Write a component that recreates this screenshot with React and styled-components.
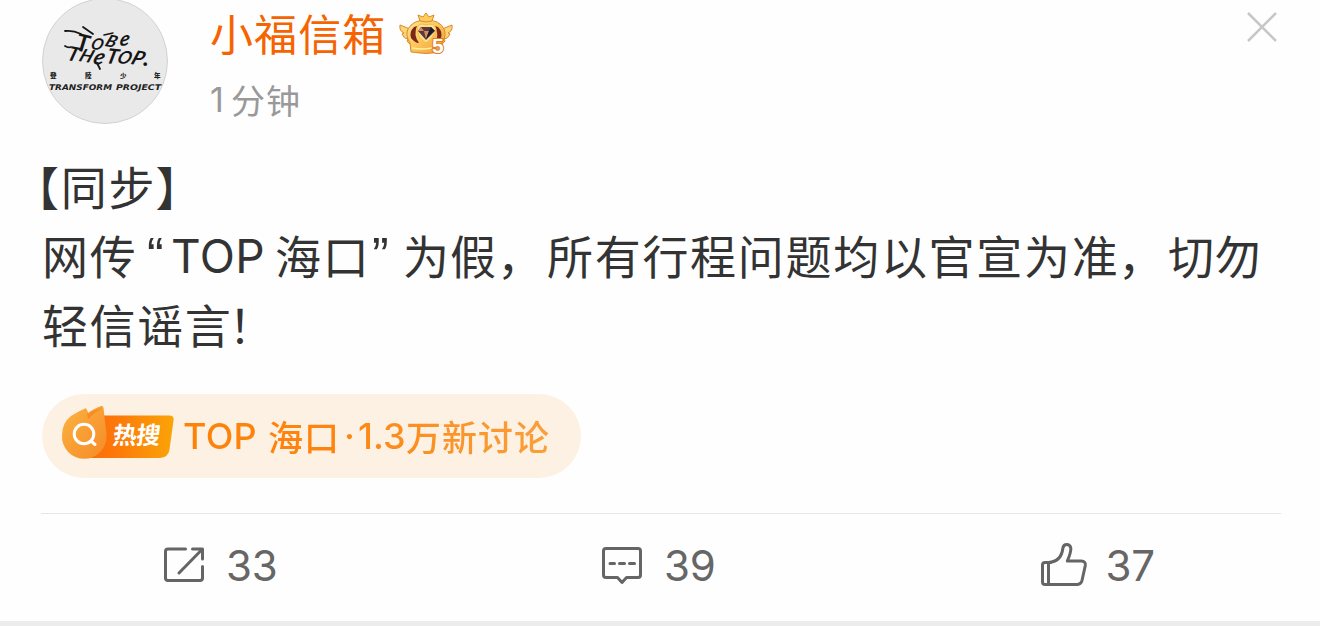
import React from "react";
import styled, { createGlobalStyle } from "styled-components";

const GlobalStyle = createGlobalStyle`
  * {
    box-sizing: border-box;
  }
  body {
    margin: 0;
    background: #fefefe;
    font-family: Inter, "Noto Sans CJK SC", sans-serif;
    overflow: hidden;
  }
  svg {
    display: block;
    flex: none;
  }
`;

const Card = styled.article`
  width: 1320px;
  height: 626px;
  display: flex;
  flex-direction: column;
  border-bottom: 5px solid #ececec;
  overflow: hidden;
`;

const Header = styled.header`
  height: 151px;
  padding: 0 43px 0 42px;
  display: flex;
  align-items: flex-start;
`;

const Author = styled.div`
  flex: 1;
  margin-left: 41px;
  display: flex;
  flex-direction: column;
`;

const NameRow = styled.div`
  display: flex;
  height: 70px;
  align-items: flex-start;
`;

const Name = styled.div`
  width: 188px;
  color: #f56400;
  font-size: 43px;
  line-height: 70px;
  letter-spacing: 1.1px;
  white-space: nowrap;
`;

const Time = styled.div`
  display: flex;
  color: #999;
  line-height: 59px;
`;

const Close = styled.button`
  margin-top: 12px;
  padding: 0;
  border: 0;
  background: none;
`;

const Body = styled.div`
  height: 243px;
  padding-left: 42px;
  color: #333;
`;

const Line = styled.p`
  display: flex;
  height: 69px;
  margin: 0;
  line-height: 69px;
  white-space: pre;
`;

const Run = styled.span`
  margin-left: ${(p) => p.$left || 0}px;
  width: ${(p) => (p.$width ? `${p.$width}px` : "auto")};
  padding-top: ${(p) => p.$drop || 0}px;
  flex: none;
  font-family: ${(p) => p.$font || '"Noto Sans CJK SC"'}, sans-serif;
  font-size: ${(p) => p.$size || 46}px;
  letter-spacing: ${(p) => (p.$space === undefined ? 1.8 : p.$space)}px;
`;

const Topic = styled.div`
  width: 539px;
  height: 84px;
  margin-left: 42px;
  padding-left: 18px;
  display: flex;
  align-items: center;
  border-radius: 42px;
  background: #fdf1e4;
`;

const TopicText = styled.div`
  display: flex;
  height: 84px;
  line-height: 84px;
  margin-left: 7px;
  font-weight: 500;
  white-space: pre;
  color: transparent;
  background: linear-gradient(90deg, #fd8208, #fd8410 40%, #f9a03c);
  background-clip: text;
`;

const Actions = styled.footer`
  width: 1240px;
  height: 108px;
  margin: 35px 0 0 41px;
  display: grid;
  grid-template-columns: 438px 438px 1fr;
  border-top: 1px solid #e5e5e5;
`;

const Action = styled.button`
  display: flex;
  align-items: center;
  height: 104px;
  padding: 0 0 0 ${(p) => p.$left}px;
  border: 0;
  background: none;
  color: #666;
  font: 400 42px Inter, sans-serif;
`;

const Count = styled.span`
  margin-left: ${(p) => p.$left || 20}px;
  padding-bottom: 2px;
  letter-spacing: -0.3px;
`;

const Avatar = () => (
  <svg width="127" height="126" viewBox="42 0 127 126">
    <circle cx="105" cy="61" r="62.5" fill="#e9e9e9" stroke="#d2d2d2" />
    <g
      fill="#161616"
      fontFamily="Lato"
      fontWeight="700"
      fontStyle="italic"
      fontSize="20"
    >
      <text transform="translate(75 50) rotate(14) skewX(4)" fontSize="24">T</text>
      <text transform="translate(90 49) rotate(6) skewX(-10)" fontSize="16">O</text>
      <text transform="translate(104 46) rotate(10) skewX(-14)" fontSize="17">B</text>
      <text transform="translate(119 46) rotate(-4) skewX(-14)" fontSize="20">e</text>
      <text transform="translate(66 60) rotate(10) skewX(-8)">T</text>
      <text transform="translate(78 61) rotate(8) skewX(-14)" fontSize="18">H</text>
      <text transform="translate(92 64) rotate(4) skewX(-14)" fontSize="22">e</text>
      <text transform="translate(105 63) rotate(6) skewX(-8)" fontSize="21">T</text>
      <text transform="translate(116 63) rotate(6) skewX(-14)" fontSize="18">O</text>
      <text transform="translate(130 64) rotate(8) skewX(-14)" fontSize="20">P</text>
      <text transform="translate(143 66)" fontSize="24">.</text>
    </g>
    <g fill="none" stroke="#161616" strokeLinecap="round">
      <path d="M65 31q8-1 16 3M83 27l10 7M65 46q3 2 6 1M97 63l3 6" strokeWidth="1.8" />
      <path d="M104 35l9-2" strokeWidth="1.5" />
    </g>
    <g
      fill="#222"
      fontFamily="Noto Sans CJK TC"
      fontWeight="900"
      fontSize="6.5"
    >
      <text x="50" y="78">登</text>
      <text x="85" y="78">陸</text>
      <text x="120" y="78">少</text>
      <text x="154" y="78">年</text>
    </g>
    <g
      fill="#222"
      fontFamily="DejaVu Sans"
      fontWeight="700"
      fontStyle="italic"
      fontSize="7.8"
    >
      <text x="49" y="90" textLength="63" lengthAdjust="spacingAndGlyphs">TRANSFORM</text>
      <text x="116" y="90" textLength="45" lengthAdjust="spacingAndGlyphs">PROJECT</text>
    </g>
  </svg>
);

const CrownBadge = () => (
  <svg width="56" height="58" viewBox="398 0 56 58">
    <defs>
      <linearGradient id="gold" x1="0" y1="0" x2="1" y2="1">
        <stop offset="0" stopColor="#ffe493" />
        <stop offset=".5" stopColor="#fcc65a" />
        <stop offset="1" stopColor="#ef982f" />
      </linearGradient>
    </defs>
    <g stroke="#dc8a2b" strokeWidth="1" strokeLinejoin="round">
      <path
        d="M410 29l-10-4q-1 6 4 8l-2 1q2 5 6 5l-1 2q2 4 7 4zM442 29l10-4q1 6-4 8l2 1q-2 5-6 5l1 2q-2 4-7 4z"
        fill="#fbd477"
      />
      <path
        d="M411 52l-1-9q-5-8-2-14 5-9 18-9 14 0 18 9 3 6-2 14l-1 9q-15 3-30 0z"
        fill="url(#gold)"
      />
      <path d="M420 21l-2-6 5 2 3-4 3 4 5-2-2 6q-6 2-12 0z" fill="#fecb5c" />
    </g>
    <path d="M414 27q-5 5-3 11 4 5 8 5-6-8-2-17zM438 27q5 5 3 11-3 4-5 4 3-8-1-16z" fill="#7b2818" />
    <path d="M417 28q2-6 9-3 8-3 10 4-1 7-10 14-9-6-9-15z" fill="#ffe08a" stroke="#f4b94b" />
    <path d="M421 27h10l4 4-9 9-8-9z" fill="#5c3838" />
    <path d="M421 27l3 4-6 0zM424 31h5l-3 8z" fill="#d78b62" />
    <path d="M431 27l-2 4h6zM429 31h5l-8 8z" fill="#181d2e" />
    <path d="M412 48q10 2 20 0" fill="none" stroke="#fff0a6" strokeWidth="1.5" />
    <text
      x="432"
      y="52.5"
      fontFamily="Liberation Sans"
      fontWeight="700"
      fontSize="21"
      fill="#fff"
      stroke="#e17b1e"
      strokeWidth="2"
      paintOrder="stroke"
    >
      5
    </text>
  </svg>
);

const HotSearch = () => (
  <svg width="116" height="62" viewBox="60 405 116 62">
    <defs>
      <linearGradient id="hot" x1="0" y1="0" x2="1" y2="0">
        <stop offset="0" stopColor="#fb6a0b" />
        <stop offset=".35" stopColor="#fc780a" />
        <stop offset="1" stopColor="#faa407" />
      </linearGradient>
      <linearGradient id="flame" x1="0" y1="0" x2="1" y2="1">
        <stop offset="0" stopColor="#fcb340" />
        <stop offset="1" stopColor="#f58a28" />
      </linearGradient>
    </defs>
    <path d="M92 415.500h77q5.500 0 4.500 5l-4 29q-1 8-10 8.500H84z" fill="url(#hot)" />
    <path
      d="M84 409q2-2 3 1l1 3q3-3 13-7 2.500-.5 2.500 2l2 18q1 6 1 9A22.300 22.300 0 1 1 62 435q0-12 9-19 6-4 13-7z"
      fill="url(#flame)"
    />
    <path d="M86.500 409l1.500 10q7-7 14-11-9 2-14 6z" fill="#f47c20" opacity=".6" />
    <circle cx="84" cy="434" r="9.800" fill="none" stroke="#fff" strokeWidth="3" />
    <path d="M91 441l4 3.500" stroke="#fff" strokeWidth="3" strokeLinecap="round" />
    <text
      transform="translate(112 444) skewX(-7)"
      fontFamily="Noto Sans CJK SC"
      fontWeight="700"
      fontSize="24"
      letterSpacing="-.5"
      fill="#fff"
    >
      热搜
    </text>
  </svg>
);

const icon = {
  fill: "none",
  stroke: "#656565",
  strokeWidth: 3,
  strokeLinecap: "round",
  strokeLinejoin: "round",
};

const ShareIcon = () => (
  <svg width="44" height="48" viewBox="162 542 44 48" {...icon}>
    <path d="M185.500 549H168q-2.500 0-2.500 2.500V578q0 2.500 2.500 2.500h32q2.500 0 2.500-2.500V566.500M192.500 549h10v10M202 549.500L179 573" />
  </svg>
);

const CommentIcon = () => (
  <svg width="44" height="48" viewBox="600 542 44 48" {...icon}>
    <path d="M606 548.500h32q2.500 0 2.500 2.500v24q0 2.500-2.500 2.500h-11.500l-4.500 5-4.500-5H606q-2.500 0-2.500-2.500v-24q0-2.500 2.500-2.500z" />
    <path d="M610 563.500h4.500M619.500 563.500h5M629.500 563.500h5" />
  </svg>
);

const LikeIcon = () => (
  <svg width="48" height="48" viewBox="1040 542 48 48" {...icon}>
    <path d="M1051 562.500h-6q-2.500 0-2.500 2.500v17q0 2.500 2.500 2.500h32.500q3.500 0 4.500-4l3.300-15q.5-4.500-4-4.500h-14q4-9 3.500-13-.8-3.500-4-3.500-3.500 0-4 4-1.500 13-14.300 14v22" />
  </svg>
);

const App = () => {
  return (
    <>
      <GlobalStyle />
      <Card>
        <Header>
          <Avatar />
          <Author>
            <NameRow>
              <Name>小福信箱</Name>
              <CrownBadge />
            </NameRow>
            <Time>
              <Run $font="Inter" $size={34} $width={21}>1</Run>
              <Run $size={34} $space={1}>分钟</Run>
            </Time>
          </Author>
          <Close aria-label="关闭">
            <svg width="30" height="30" viewBox="0 0 30 30">
              <path d="M1 1l28 28M29 1L1 29" stroke="#c7c7c7" strokeWidth="2.500" />
            </svg>
          </Close>
        </Header>
        <Body>
          <Line>
            <Run $left={-29}>【</Run>
            <Run>同步</Run>
            <Run $left={-1}>】</Run>
          </Line>
          <Line>
            <Run $width={105}>网传</Run>
            <Run $font="Liberation Sans" $size={50} $width={24} $drop={2}>“</Run>
            <Run $font="Inter" $width={104} $space={0.4} $drop={2}>TOP</Run>
            <Run $width={97}>海口</Run>
            <Run $font="Liberation Sans" $size={50} $width={31} $drop={2}>”</Run>
            <Run $width={94} $space={1}>为假</Run>
            <Run $width={50}>，</Run>
            <Run $width={571} $space={1.7}>所有行程问题均以官宣为准</Run>
            <Run $width={50}>，</Run>
            <Run $space={0.8}>切勿</Run>
          </Line>
          <Line>
            <Run $space={1.6}>轻信谣言</Run>
            <Run $left={-4}>！</Run>
          </Line>
        </Body>
        <Topic>
          <HotSearch />
          <TopicText>
            <Run $font="Inter" $size={36} $space={0.3} $width={85}>TOP</Run>
            <Run $size={35} $space={1} $width={76}>海口</Run>
            <Run $font="Inter" $size={36} $space={0} $width={14}>·</Run>
            <Run $font="Inter" $size={36} $space={0} $width={48}>1.3</Run>
            <Run $size={35} $space={1}>万新讨论</Run>
          </TopicText>
        </Topic>
        <Actions>
          <Action $left={121}>
            <ShareIcon />
            <Count>33</Count>
          </Action>
          <Action $left={121}>
            <CommentIcon />
            <Count>39</Count>
          </Action>
          <Action $left={122.5}>
            <LikeIcon />
            <Count $left={18}>37</Count>
          </Action>
        </Actions>
      </Card>
    </>
  );
};

export default App;
